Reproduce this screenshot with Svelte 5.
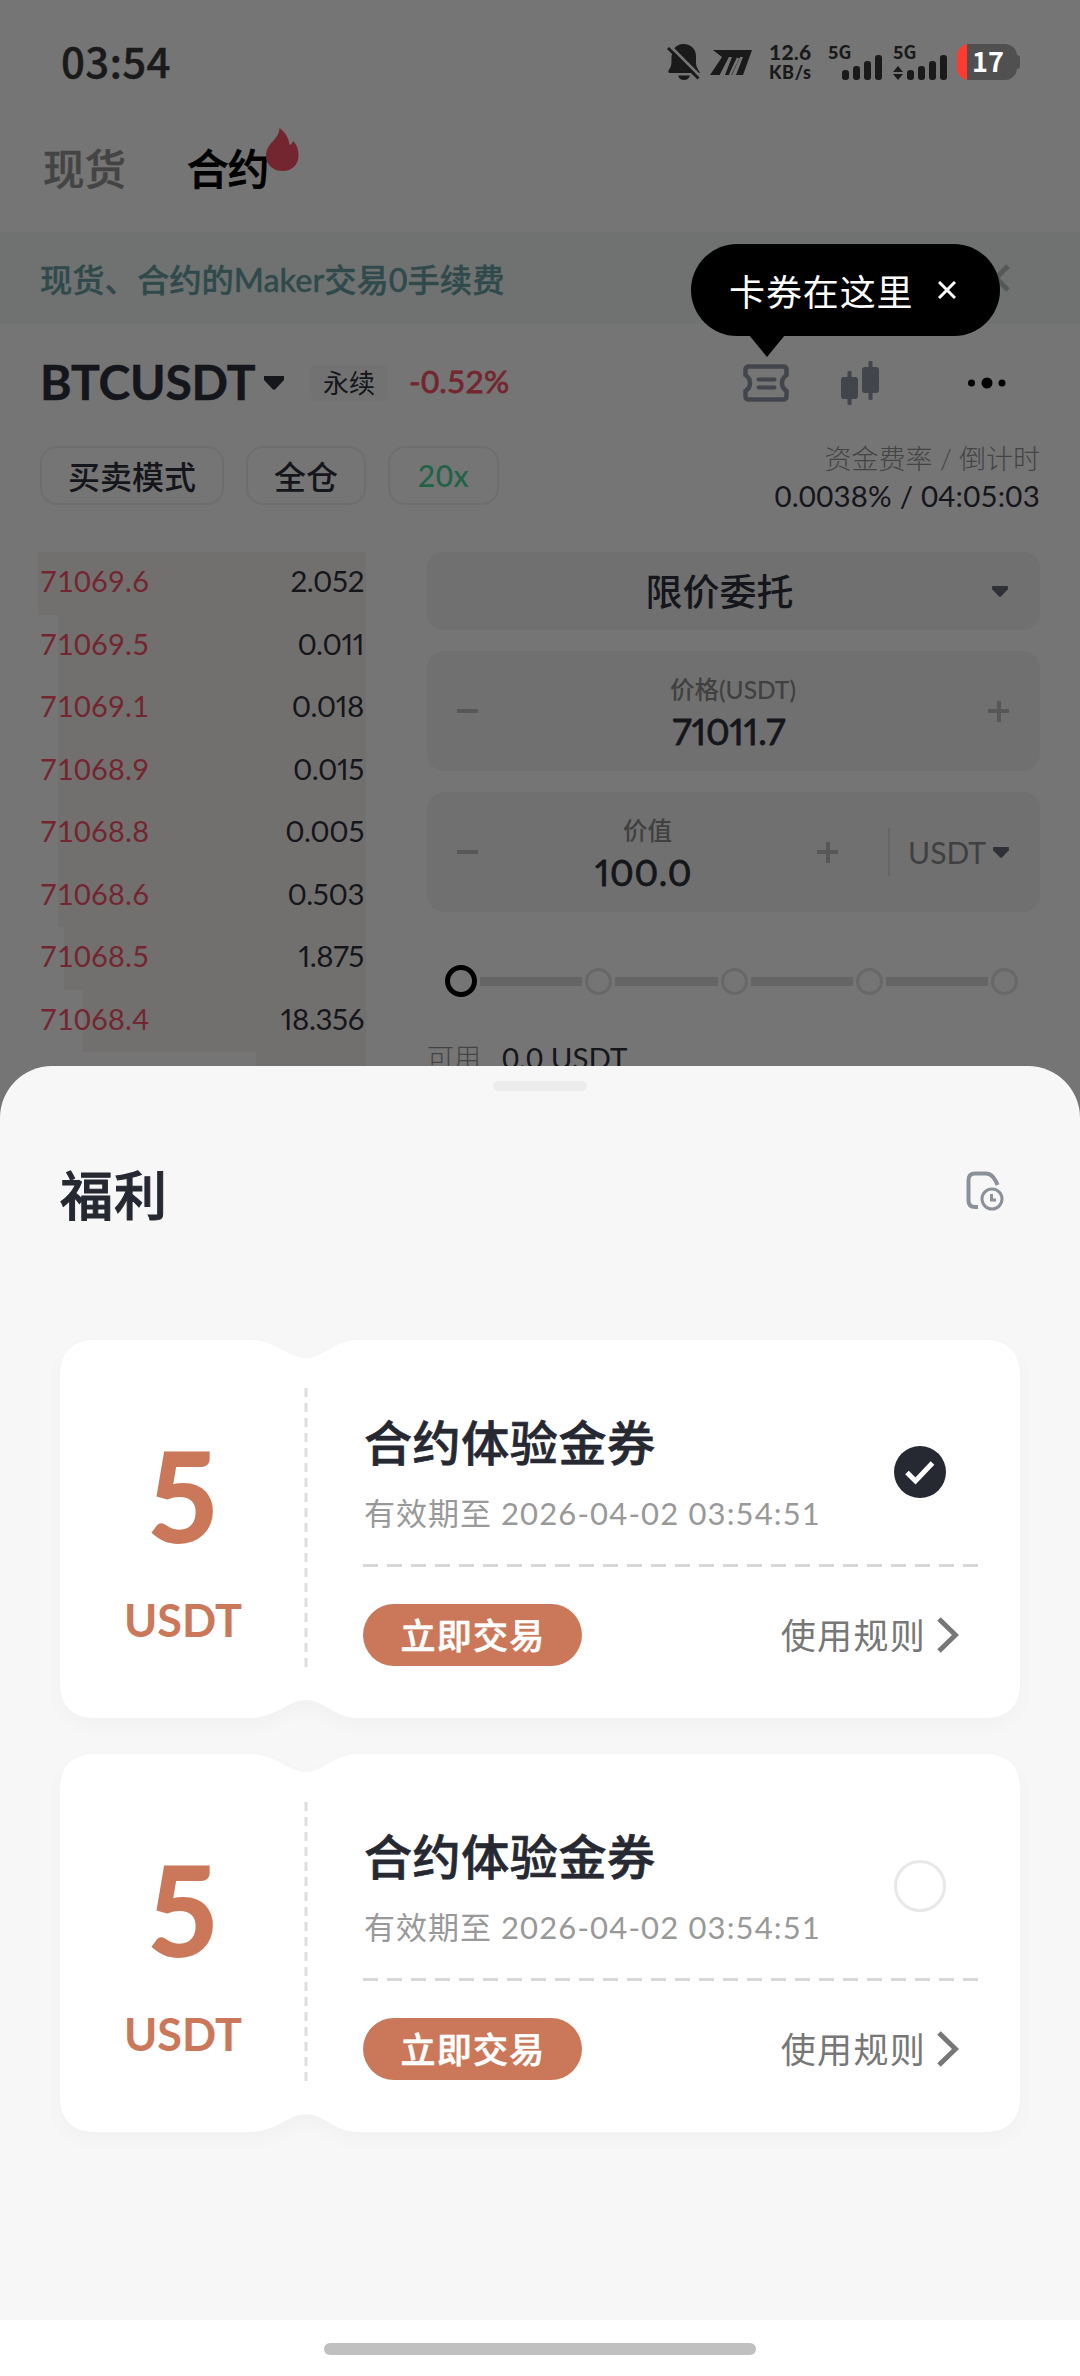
<script>
    const asks = [
        { price: "71069.6", amount: "2.052", depth: 328 },
        { price: "71069.5", amount: "0.011", depth: 308 },
        { price: "71069.1", amount: "0.018", depth: 308 },
        { price: "71068.9", amount: "0.015", depth: 308 },
        { price: "71068.8", amount: "0.005", depth: 308 },
        { price: "71068.6", amount: "0.503", depth: 308 },
        { price: "71068.5", amount: "1.875", depth: 302 },
        { price: "71068.4", amount: "18.356", depth: 283 },
        { price: "", amount: "", depth: 110 }
    ];

    const steps = [0, 25, 50, 75, 100];
    const bars = [10, 14, 19, 25];

    let showTip = true;
    let step = 0;
    let selected = 0;

    const coupons = [
        { amount: 5, unit: "USDT", title: "合约体验金券", expires: "2026-04-02 03:54:51" },
        { amount: 5, unit: "USDT", title: "合约体验金券", expires: "2026-04-02 03:54:51" }
    ];

    const closeTip = () => {
        showTip = false;
    };
</script>


<div class="screen">
    <div class="status">
        <div class="clock">03:54</div>
        <div class="indicators">
            <svg class="bell" width="34" height="38" viewBox="0 0 34 38">
                <path d="M7 6C9 2.5 12.500 1 16.500 1C24 1 29 6 29 13V20C29 24 31 26 33 30H3C1 30 1 28.500 1.800 27C4 23.500 4.500 22 4.500 18V13Z"/>
                <path d="M11 32.500H23C22 35.500 20 37 17 37S12 35.500 11 32.500Z"/>
                <path class="slash-gap" d="M3 3L34 34"/>
                <path class="slash" d="M1 5L31.500 35.500"/>
            </svg>
            <svg class="brand" width="42" height="25" viewBox="0 0 42 25">
                <path d="M3 0H42L33 25H26L33 7H30L22 25H15L22 7H19L10 25H0L12 7Z"/>
                <path class="brand-gap" d="M20 8L11 25M28 8L20 25"/>
            </svg>
            <div class="speed">
                <span class="rate">12.6</span>
                <span class="rate-unit">KB/s</span>
            </div>
            <div class="signal">
                <span>5G</span>
                <div class="bars">
                    {#each bars as height}
                        <i style="height: {height}px"></i>
                    {/each}
                </div>
            </div>
            <div class="signal second">
                <span>5G</span>
                <div class="bars">
                    <svg width="10" height="14" viewBox="0 0 10 14">
                        <path d="M5 0L10 6H0ZM5 14L0 8H10Z"/>
                    </svg>
                    {#each bars as height}
                        <i style="height: {height}px"></i>
                    {/each}
                </div>
            </div>
            <div class="battery"><b>17</b></div>
            <div class="nub"></div>
        </div>
    </div>

    <div class="tabs">
        <div class="tab">现货</div>
        <div class="tab active">
            合约
            <svg class="flame" width="33" height="43" viewBox="0 0 33 43">
                <path d="M13.500 0C19 4 23 10 23.500 17C25 16.500 26.500 15 27 13C31 17 32.500 21.500 32.500 27C32.500 37 26 43 16.500 43S0 37 0 27.500C0 21 3.500 17 7.500 12.500C10.500 9 13 6 13.500 0Z"/>
            </svg>
        </div>
    </div>

    <div class="banner">
        <span>现货、合约的Maker交易0手续费</span>
        <svg width="28" height="28" viewBox="0 0 28 28"><path d="M2 2L26 26M26 2L2 26"/></svg>
    </div>

    {#if showTip}
        <div class="tip">
            <span>卡券在这里</span>
            <svg on:click={closeTip} width="18" height="18" viewBox="0 0 18 18"><path d="M1 1L17 17M17 1L1 17"/></svg>
        </div>
    {/if}

    <div class="pair">
        <div class="symbol">BTCUSDT</div>
        <svg class="caret" width="20" height="14" viewBox="0 0 20 14"><path d="M0 0H20V4L11.500 13Q10 14.500 8.500 13L0 4Z"/></svg>
        <div class="kind">永续</div>
        <div class="change">-0.52%</div>
        <div class="tools">
            <svg class="ticket" width="46" height="38" viewBox="0 0 46 38">
                <path d="M6 2.500H40Q43.500 2.500 43.500 6V11C37.500 15 37.500 23 43.500 27V32Q43.500 35.500 40 35.500H6Q2.500 35.500 2.500 32V27C8.500 23 8.500 15 2.500 11V6Q2.500 2.500 6 2.500Z"/>
                <path class="lines" d="M15.500 15.500H31.500M15.500 23.500H31.500"/>
            </svg>
            <svg class="candles" width="38" height="44" viewBox="0 0 38 44">
                <rect x="0" y="16" width="17" height="22" rx="3"/>
                <rect x="6.500" y="10" width="4" height="34" rx="1"/>
                <rect x="21" y="6" width="17" height="26" rx="3"/>
                <rect x="27.500" y="0" width="4" height="39" rx="1"/>
            </svg>
            <svg class="more" width="38" height="12" viewBox="0 0 38 12">
                <circle cx="3.500" cy="6" r="3.500"/><circle cx="19" cy="6" r="5.500"/><circle cx="34" cy="6" r="3.500"/>
            </svg>
        </div>
    </div>

    <div class="modes">
        <div class="mode wide">买卖模式</div>
        <div class="mode">全仓</div>
        <div class="mode leverage">20x</div>
        <div class="funding">
            <div class="funding-label">资金费率 / 倒计时</div>
            <div class="funding-value">0.0038% / 04:05:03</div>
        </div>
    </div>

    <div class="trade">
        <div class="book">
            {#each asks as ask}
                <div class="ask">
                    <div class="depth" style="width: {ask.depth}px"></div>
                    <span class="price">{ask.price}</span>
                    <span class="amount">{ask.amount}</span>
                </div>
            {/each}
        </div>

        <div class="form">
            <div class="select">
                限价委托
                <svg class="caret" width="16" height="11" viewBox="0 0 20 14"><path d="M0 0H20V4L11.500 13Q10 14.500 8.500 13L0 4Z"/></svg>
            </div>
            <div class="field">
                <i class="minus"></i>
                <div class="entry">
                    <div class="label">价格(USDT)</div>
                    <div class="value">71011.7</div>
                </div>
                <i class="plus"></i>
            </div>
            <div class="field">
                <i class="minus"></i>
                <div class="entry">
                    <div class="label">价值</div>
                    <div class="value wider">100.0</div>
                </div>
                <i class="plus"></i>
                <div class="unit">
                    <span>USDT</span>
                    <svg class="caret" width="16" height="11" viewBox="0 0 20 14"><path d="M0 0H20V4L11.500 13Q10 14.500 8.500 13L0 4Z"/></svg>
                </div>
            </div>
            <div class="slider">
                {#each steps as _, position}
                    {#if position > 0}
                        <div class="track"></div>
                    {/if}
                    <div class="stop" class:current={position === step}></div>
                {/each}
            </div>
            <div class="available"><span>可用</span><b>0.0 USDT</b></div>
        </div>
    </div>

    <div class="sheet">
        <div class="handle"></div>
        <div class="sheet-head">
            <h1>福利</h1>
            <svg width="38" height="40" viewBox="0 0 38 40">
                <path class="sheet-icon" d="M12 36H9Q2.500 36 2.500 29.500V9Q2.500 2.500 9 2.500H20Q24 2.500 27 6Q30 9.500 31.500 14"/>
                <circle cx="26" cy="28" r="10"/>
                <path class="hands" d="M25.500 23V29H30"/>
            </svg>
        </div>

        {#each coupons as coupon, position}
            <div class="coupon">
                <svg class="paper" width="960" height="378" viewBox="0 0 960 378">
                    <path d="M36 0H190C216 0 228 18 246 18S274 0 298 0H924Q960 0 960 36V342Q960 378 924 378H298C274 378 264 360 246 360S216 378 190 378H36Q0 378 0 342V36Q0 0 36 0Z"/>
                    <line x1="246" y1="48" x2="246" y2="327" stroke-dasharray="9 6"/>
                </svg>
                <div class="worth">
                    <div class="sum">{coupon.amount}</div>
                    <div class="currency">{coupon.unit}</div>
                </div>
                <div class="details">
                    <div class="summary">
                        <div>
                            <div class="name">{coupon.title}</div>
                            <div class="expires">有效期至 <span>{coupon.expires}</span></div>
                        </div>
                        <div class="check"
                             class:on={position === selected}
                             on:click={() => selected = position}>
                            {#if position === selected}
                                <svg width="52" height="52" viewBox="0 0 52 52"><path d="M13 26.500L21.500 35L38.500 17"/></svg>
                            {/if}
                        </div>
                    </div>
                    <svg class="divider" width="616" height="3" viewBox="0 0 616 3">
                        <line x1="0" y1="1.500" x2="616" y2="1.500" stroke-dasharray="15 9"/>
                    </svg>
                    <div class="actions">
                        <div class="go">立即交易</div>
                        <div class="rules">
                            使用规则
                            <svg width="22" height="36" viewBox="0 0 22 36"><path d="M2 2L18.500 18L2 34"/></svg>
                        </div>
                    </div>
                </div>
            </div>
        {/each}
    </div>

    <div class="nav"><div class="pill"></div></div>
</div>


<style>
    :global(body) {
        margin: 0;
    }

    .screen {
        position: relative;
        width: 1080px;
        height: 2376px;
        overflow: hidden;
        background: #757575;
        font-family: Lato, "Noto Sans CJK SC", sans-serif;
        color: #15161b;
    }

    .screen * {
        box-sizing: border-box;
    }

    svg {
        display: block;
        flex: none;
    }

    /** status bar **/

    .status {
        height: 124px;
        padding: 0 60px 0 61px;
        display: flex;
        align-items: center;
        justify-content: space-between;
        color: #1a1a1a;
        font-family: "Noto Sans CJK SC", sans-serif;
    }

    .clock {
        margin-top: -5px;
        font-size: 42px;
        font-weight: 500;
        line-height: 60px;
        letter-spacing: 0.3px;
        -webkit-text-stroke: 0.4px #1a1a1a;
    }

    .indicators {
        height: 38px;
        display: flex;
        align-items: center;
        fill: #1a1a1a;
    }

    .slash {
        fill: none;
        stroke: #1a1a1a;
        stroke-width: 3;
    }

    .slash-gap {
        fill: none;
        stroke: #757575;
        stroke-width: 3;
    }

    .brand {
        margin: 0 17px 0 9px;
    }

    .brand-gap {
        fill: none;
        stroke: #757575;
        stroke-width: 2.5;
    }

    .speed {
        width: 44px;
        margin-right: 15px;
        display: flex;
        flex-direction: column;
        font-family: Lato, sans-serif;
        font-weight: 900;
        white-space: nowrap;
    }

    .rate {
        font-size: 21px;
        line-height: 20px;
        letter-spacing: 0.2px;
    }

    .rate-unit {
        font-size: 18px;
        line-height: 20px;
        letter-spacing: 0.6px;
    }

    .signal {
        position: relative;
        width: 54px;
        height: 36px;
        margin-right: 11px;
    }

    .signal.second {
        margin-right: 10px;
    }

    .signal span {
        position: absolute;
        top: -2px;
        left: 0;
        font-size: 18px;
        font-weight: 700;
        line-height: 18px;
    }

    .bars {
        height: 36px;
        display: flex;
        justify-content: flex-end;
        align-items: flex-end;
        gap: 4px;
    }

    .bars i {
        width: 7px;
        border-radius: 3px;
        background: #1a1a1a;
    }

    .battery {
        width: 60px;
        height: 36px;
        padding-left: 2px;
        border-radius: 12px;
        background: linear-gradient(90deg, #ff3b2f 10px, #505050 10px);
        color: #fff;
        font-size: 27px;
        line-height: 34px;
        text-align: center;
    }

    .nub {
        width: 3px;
        height: 14px;
        border-radius: 0 3px 3px 0;
        background: #505050;
    }

    /** tabs **/

    .tabs {
        height: 108px;
        padding: 15px 0 0 43px;
        display: flex;
        gap: 61px;
        font-size: 41.5px;
        font-weight: 500;
        line-height: 60px;
        color: #444;
        -webkit-text-stroke: 0.4px;
    }

    .tab.active {
        position: relative;
        color: #000;
        letter-spacing: -0.8px;
        -webkit-text-stroke: 0.8px #000;
    }

    .flame {
        position: absolute;
        left: 79px;
        top: -11px;
        fill: #73262f;
    }

    .flame path {
        stroke: none;
    }

    /** notice **/

    .banner {
        height: 92px;
        padding: 0 70px 0 40px;
        display: flex;
        align-items: center;
        justify-content: space-between;
        background: #707272;
        color: #304a4c;
        font-size: 32.3px;
        font-weight: 500;
        -webkit-text-stroke: 0.4px #304a4c;
    }

    .banner svg {
        fill: none;
        stroke: #555858;
        stroke-width: 5;
    }

    .tip {
        position: absolute;
        left: 691px;
        top: 244px;
        width: 309px;
        height: 92px;
        padding-left: 38px;
        border-radius: 46px;
        background: #000;
        color: #fff;
        display: flex;
        align-items: center;
        font-size: 36px;
        letter-spacing: 0.9px;
    }

    .tip::after {
        content: "";
        position: absolute;
        left: 58px;
        top: 91px;
        border: 18px solid transparent;
        border-top: 22px solid #000;
        border-bottom: 0;
    }

    .tip svg {
        margin-left: 24px;
        fill: none;
        stroke: #fff;
        stroke-width: 3;
    }

    /** pair **/

    .pair {
        height: 117px;
        padding: 0 74px 0 40px;
        display: flex;
        align-items: center;
    }

    .symbol {
        width: 224px;
        margin-top: -2px;
        font-size: 48px;
        font-weight: 700;
        letter-spacing: -0.2px;
        -webkit-text-stroke: 0.5px #15161b;
    }

    .caret {
        fill: #16171d;
    }

    .kind {
        width: 78px;
        height: 36px;
        margin: 0 21px 0 26px;
        border-radius: 6px;
        background: #727272;
        font-size: 26px;
        line-height: 36px;
        text-align: center;
    }

    .change {
        margin-top: -4px;
        color: #74262f;
        font-size: 31.5px;
        letter-spacing: 0.2px;
        -webkit-text-stroke: 0.8px #74262f;
    }

    .tools {
        margin-left: auto;
        display: flex;
        align-items: center;
    }

    .ticket {
        fill: none;
        stroke: #43454c;
        stroke-width: 4.5;
    }

    .ticket .lines {
        stroke-width: 4;
        stroke-linecap: round;
    }

    .candles {
        margin: 0 89px 0 52px;
        fill: #43454c;
    }

    /** modes **/

    .modes {
        height: 111px;
        padding: 5px 40px 0;
        display: flex;
    }

    .mode {
        width: 120px;
        height: 59px;
        margin-right: 22px;
        border: 2px solid #6e6e6e;
        border-radius: 17px;
        font-size: 32px;
        line-height: 58px;
        text-align: center;
        font-weight: 500;
    }

    .mode.wide {
        width: 184px;
    }

    .mode.leverage {
        width: 111px;
        margin: 0;
        color: #1f6346;
        font-size: 30px;
        line-height: 54px;
        letter-spacing: 0.5px;
    }

    .funding {
        flex: 1;
        margin-top: -4px;
        text-align: right;
        white-space: nowrap;
    }

    .funding-label {
        color: #444;
        font-size: 27px;
        font-weight: 300;
        line-height: 34px;
    }

    .funding-value {
        margin-top: 3px;
        font-size: 29.5px;
        line-height: 34px;
        letter-spacing: 0.2px;
    }

    /** order book **/

    .trade {
        height: 514px;
        padding: 0 40px 0 38px;
        display: flex;
        justify-content: space-between;
        overflow: hidden;
    }

    .book {
        width: 328px;
    }

    .ask {
        position: relative;
        height: 62.5px;
        padding: 0 2px;
        display: flex;
        justify-content: space-between;
        font-size: 29px;
        line-height: 58px;
    }

    .ask span {
        position: relative;
    }

    .depth {
        position: absolute;
        top: 0;
        right: 0;
        height: 100%;
        background: #72706f;
    }

    .price {
        color: #74262f;
        letter-spacing: 0.2px;
    }

    .amount {
        font-size: 29.5px;
        font-variant-numeric: proportional-nums;
        letter-spacing: -0.4px;
    }

    /** order form **/

    .form {
        width: 613px;
        flex: none;
    }

    .select {
        position: relative;
        height: 78px;
        border-radius: 16px;
        background: #707070;
        font-size: 37px;
        font-weight: 500;
        line-height: 80px;
        text-align: center;
        padding-right: 28px;
    }

    .form .caret {
        fill: #303138;
    }

    .select .caret {
        position: absolute;
        right: 32px;
        top: 34px;
    }

    .field {
        height: 120px;
        margin-top: 21px;
        padding: 0 31px 0 30px;
        border-radius: 18px;
        background: #707070;
        display: flex;
        align-items: center;
    }

    .minus, .plus {
        position: relative;
        width: 21px;
        height: 4px;
        background: #575757;
    }

    .plus::after {
        content: "";
        position: absolute;
        left: 8.5px;
        top: -8.5px;
        width: 4px;
        height: 21px;
        background: #575757;
    }

    .entry {
        flex: 1;
        text-align: center;
    }

    .label {
        height: 40px;
        color: #404040;
        font-size: 24.5px;
        font-weight: 500;
        line-height: 38px;
    }

    .value {
        padding-right: 8px;
        font-size: 36px;
        line-height: 40px;
        font-variant-numeric: proportional-nums;
        -webkit-text-stroke: 0.8px #15161b;
    }

    .value.wider {
        letter-spacing: 0.8px;
    }

    .unit {
        height: 48px;
        margin-left: 50px;
        padding-left: 18px;
        border-left: 2px solid #666;
        display: flex;
        align-items: center;
        color: #404040;
        font-size: 30px;
        gap: 7px;
    }

    .slider {
        height: 32px;
        margin: 53px 22px 0 18px;
        display: flex;
        align-items: center;
    }

    .stop {
        width: 27px;
        height: 27px;
        flex: none;
        border: 3px solid #686868;
        border-radius: 50%;
    }

    .stop.current {
        width: 32px;
        height: 32px;
        border: 5px solid #000;
    }

    .track {
        flex: 1;
        height: 9px;
        margin: 0 3px 0 3px;
        background: #656565;
    }

    .available {
        margin-top: 42px;
        display: flex;
        gap: 20px;
        font-size: 27px;
        line-height: 38px;
    }

    .available span {
        width: 55px;
        color: #444;
        font-weight: 300;
        white-space: nowrap;
    }

    .available b {
        font-size: 29.5px;
        font-weight: 400;
    }

    /** welfare sheet **/

    .sheet {
        height: 1254px;
        border-radius: 52px 52px 0 0;
        background: #f7f7f7;
        color: #262932;
        position: relative;
        display: flex;
        flex-direction: column;
        gap: 36px;
        padding: 0 60px;
    }

    .handle {
        width: 94px;
        height: 10px;
        margin: 15px auto 0;
        border-radius: 5px;
        background: #ececec;
        flex: none;
    }

    .sheet-head {
        height: 177px;
        flex: none;
        padding: 22px 16px 0 0;
        display: flex;
        justify-content: space-between;
    }

    h1 {
        margin: 0;
        font-size: 53px;
        font-weight: 500;
        line-height: 93px;
        letter-spacing: 1px;
        -webkit-text-stroke: 1px #262932;
    }

    .sheet-head svg {
        margin-top: 22px;
        fill: none;
        stroke: #8b919b;
        stroke-width: 3;
    }

    .sheet-head .sheet-icon {
        stroke-width: 4;
    }

    .coupon {
        position: relative;
        height: 378px;
        flex: none;
        display: flex;
    }

    .paper {
        position: absolute;
        left: 0;
        top: 0;
        overflow: visible;
        filter: drop-shadow(0 8px 8px rgba(0, 0, 0, .025));
        fill: #fff;
    }

    .paper line {
        stroke: #dedede;
        stroke-width: 3;
    }

    .worth {
        position: relative;
        width: 246px;
        padding-top: 90px;
        text-align: center;
        color: #cb785a;
        font-weight: 700;
    }

    .sum {
        font-size: 125px;
        font-weight: 900;
        line-height: 130px;
    }

    .currency {
        margin-top: 30px;
        font-size: 45px;
        line-height: 60px;
    }

    .details {
        position: relative;
        width: 616px;
        margin-left: 57px;
        padding-top: 67px;
    }

    .summary {
        display: flex;
        justify-content: space-between;
        height: 157px;
        padding: 0 33px 0 1px;
    }

    .name {
        font-size: 48px;
        font-weight: 500;
        line-height: 72px;
        letter-spacing: 0.6px;
        -webkit-text-stroke: 0.7px #262932;
    }

    .expires {
        margin-top: 9px;
        color: #999;
        font-size: 31px;
        line-height: 50px;
        letter-spacing: 1px;
    }

    .expires span {
        letter-spacing: 1.15px;
    }

    .check {
        width: 52px;
        height: 52px;
        margin-top: 39px;
        border-radius: 50%;
        border: 3px solid #e8e8e8;
    }

    .check.on {
        border: 0;
        background: #262932;
    }

    .check svg {
        fill: none;
        stroke: #fff;
        stroke-width: 5;
    }

    .divider line {
        stroke: #d8d8d8;
        stroke-width: 3;
    }

    .actions {
        margin-top: 37px;
        padding-right: 20px;
        display: flex;
        justify-content: space-between;
        align-items: center;
    }

    .go {
        width: 219px;
        height: 62px;
        padding-left: 1px;
        border-radius: 31px;
        background: #cb785a;
        color: #fff;
        font-size: 35px;
        font-weight: 500;
        line-height: 63px;
        letter-spacing: 1.3px;
        text-align: center;
        -webkit-text-stroke: 0.6px #fff;
    }

    .rules {
        display: flex;
        align-items: center;
        gap: 11px;
        color: #777;
        font-size: 35px;
        line-height: 50px;
        letter-spacing: 1.3px;
    }

    .rules svg {
        fill: none;
        stroke: #777;
        stroke-width: 5;
    }

    /** system navigation **/

    .nav {
        height: 56px;
        padding-top: 23px;
        background: #fff;
    }

    .pill {
        width: 432px;
        height: 12px;
        margin: 0 auto;
        border-radius: 6px;
        background: #c0c0c0;
    }
</style>
